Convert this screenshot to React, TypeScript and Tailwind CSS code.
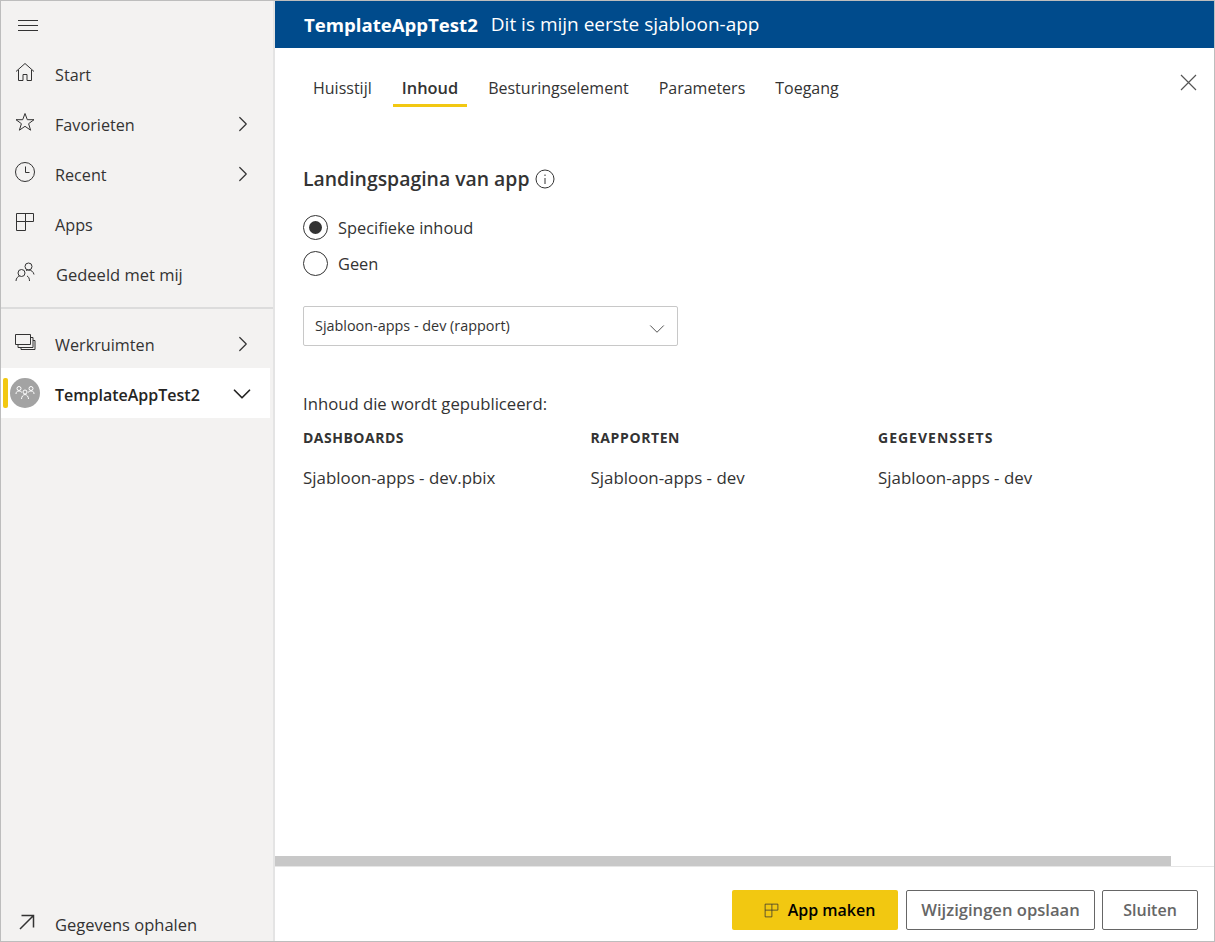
import { ChevronDown, ChevronRight } from 'lucide-react';
import type { ReactNode } from 'react';

const font = { fontFamily: '"Open Sans", "Noto Sans", sans-serif' };

function AppsIcon({ size = 20, color = '#333' }: { size?: number; color?: string }) {
  return (
    <svg width={size} height={size} viewBox="0 0 20 20" fill="none" stroke={color} strokeWidth="1">
      <path d="M1.5 1.5H18.5V9.5H10.5V18.5H1.5Z" />
      <path d="M1.5 9.5H10.5V1.5" />
    </svg>
  );
}

const HomeIcon = (
  <svg width="20" height="20" viewBox="0 0 20 20" fill="none" stroke="#333" strokeWidth="1">
    <path d="M1 9.5 10 1.5l9 8M3.5 8v10.5h4.500v-6h4v6h4.500V8" />
  </svg>
);

const StarIcon = (
  <svg width="20" height="20" viewBox="0 0 20 20" fill="none" stroke="#333" strokeWidth="1">
    <path d="M10 1.500l2.300 6.200h6.700l-5.400 4 2 6.500-5.600-3.900-5.600 3.900 2-6.500-5.400-4h6.700z" />
  </svg>
);

const ClockIcon = (
  <svg width="20" height="20" viewBox="0 0 20 20" fill="none" stroke="#333" strokeWidth="1">
    <circle cx="10" cy="10" r="9.500" />
    <path d="M10.500 4.500v6h4" />
  </svg>
);

const SharedIcon = (
  <svg width="20" height="20" viewBox="0 0 20 20" fill="none" stroke="#333" strokeWidth="1">
    <circle cx="6.500" cy="11" r="3.500" />
    <circle cx="13.500" cy="4.500" r="3.500" />
    <path d="M1 19c0-3 2-4.500 3.500-5M12 14c1.500.5 2.500 2.500 2.500 5M11 8.500c1-.5 1.500-.5 2.500-.5 3 0 5 2 5.500 4.500" />
  </svg>
);

const WorkspacesIcon = (
  <svg width="22" height="20" viewBox="0 0 22 20" fill="none" stroke="#333" strokeWidth="1">
    <path d="M1.500 2.500h15v10h-15z" />
    <path d="M16.500 5.500h2.500v10H4v-3M19 8.500h2v9H7v-2" />
  </svg>
);

const ArrowIcon = (
  <svg width="16" height="16" viewBox="0 0 16 16" fill="none" stroke="#333" strokeWidth="1.500" className="translate-x-[2px]">
    <path d="M1 15 14.500 1.500M2.500 1.500h12v12" />
  </svg>
);

function NavRow({ icon, label, chevron, labelClass = 'ml-[6px] text-[16.200px]' }: { icon: ReactNode; label: string; chevron?: boolean; labelClass?: string }) {
  return (
    <div className="flex h-[50px] items-center text-[#333]">
      <div className="flex w-[48px] -translate-y-[2px] justify-center">{icon}</div>
      <span className={`flex-1 pt-[2px] ${labelClass}`}>{label}</span>
      {chevron && <ChevronRight size={26} strokeWidth={1.1} className="mr-[17px]" />}
    </div>
  );
}

function Radio({ checked, label }: { checked?: boolean; label: string }) {
  return (
    <div className="flex h-[36px] items-center gap-[10px]">
      <div className="flex h-[25px] w-[25px] items-center justify-center rounded-full border border-[#333]">
        {checked && <div className="h-[13px] w-[13px] rounded-full bg-[#333]" />}
      </div>
      <span className="pt-[2px] text-[16.400px] text-[#333]">{label}</span>
    </div>
  );
}

function ContentColumn({ title, item, titleClass }: { title: string; item: string; titleClass: string }) {
  return (
    <div className="w-[287.500px]">
      <div className={`text-[14px] leading-[20px] font-bold text-[#333] ${titleClass}`}>{title}</div>
      <div className="mt-[20px] text-[16.900px] leading-[20px] text-[#333]">{item}</div>
    </div>
  );
}

export default function App() {
  const tabs = ['Huisstijl', 'Inhoud', 'Besturingselement', 'Parameters', 'Toegang'];

  return (
    <div className="flex h-[942px] w-[1215px] overflow-hidden border border-[#bdbdbd] bg-white" style={font}>
      <aside className="flex w-[274px] shrink-0 flex-col border-r-2 border-[#e4e4e4] bg-[#f3f2f1]">
        <div className="flex h-[48px] items-center pl-[17px]">
          <div className="flex w-[20px] flex-col gap-[4px]">
            <div className="h-px bg-[#333]" />
            <div className="h-px bg-[#333]" />
            <div className="h-px bg-[#333]" />
          </div>
        </div>
        <NavRow icon={HomeIcon} label="Start" />
        <NavRow icon={StarIcon} label="Favorieten" chevron />
        <NavRow icon={ClockIcon} label="Recent" chevron />
        <NavRow icon={<AppsIcon />} label="Apps" />
        <NavRow icon={SharedIcon} label="Gedeeld met mij" labelClass="ml-[7px] text-[16.500px]" />
        <div className="mt-[8px] h-[2px] bg-[#dcdcdc]" />
        <div className="mt-[10px] mb-[-1px]">
          <NavRow icon={WorkspacesIcon} label="Werkruimten" chevron />
        </div>
        <div className="mr-[3px] flex h-[50px] items-center bg-white text-[#252423]">
          <div className="ml-[2px] h-[30px] w-[5px] rounded-[2px] bg-[#f2c811]" />
          <div className="ml-[2px] flex h-[30px] w-[30px] items-center justify-center rounded-full bg-[#a3a3a3]">
            <svg width="20" height="16" viewBox="0 0 20 16" fill="none" stroke="#fff" strokeWidth="1">
              <circle cx="4" cy="3.500" r="2" />
              <circle cx="16" cy="3.500" r="2" />
              <circle cx="10" cy="7" r="2" />
              <path d="M1 9c0-2 1-3 3-3 1 0 2 .5 3 1.500M19 9c0-2-1-3-3-3-1 0-2 .5-3 1.500M6.500 14c0-2 1.500-4.500 3.500-4.500s3.500 2.500 3.500 4.500" />
            </svg>
          </div>
          <span className="ml-[15px] flex-1 pt-[3px] text-[16px] font-semibold">TemplateAppTest2</span>
          <ChevronDown size={30} strokeWidth={1.4} className="mr-[13px] translate-y-[1px]" />
        </div>
        <div className="mt-auto mb-[-8px]">
          <NavRow icon={ArrowIcon} label="Gegevens ophalen" labelClass="ml-[6px] text-[16.500px]" />
        </div>
      </aside>

      <main className="flex min-w-0 flex-1 flex-col">
        <header className="flex h-[47px] shrink-0 items-center gap-[13px] bg-[#004b8c] pl-[29px] text-white">
          <span className="text-[18.600px] font-bold">TemplateAppTest2</span>
          <span className="text-[19px]">Dit is mijn eerste sjabloon-app</span>
        </header>

        <div className="flex min-h-0 flex-1 flex-col">
          <div className="flex items-start justify-between">
            <nav className="mt-[21px] ml-[29px] flex gap-[12px]">
              {tabs.map((t) => (
                <div
                  key={t}
                  className={`flex h-[38px] items-center border-b-[3px] px-[9px] pt-[3px] text-[#333] ${
                    t === 'Inhoud' ? 'border-[#f2c811] text-[16.400px] font-semibold' : 'border-transparent text-[16px]'
                  }`}
                >
                  {t}
                </div>
              ))}
            </nav>
            <svg width="18" height="18" viewBox="0 0 18 18" fill="none" stroke="#555" strokeWidth="1.200" className="mt-[25px] mr-[17px]">
              <path d="M2 2 17 17M17 2 2 17" />
            </svg>
          </div>

          <section className="flex-1 pt-[59px] pl-[28px]">
            <div className="flex items-center gap-[5px]">
              <h2 className="pt-[1px] text-[19.400px] leading-[24px] font-semibold text-[#333]">Landingspagina van app</h2>
              <svg width="20" height="20" viewBox="0 0 20 20" fill="none" stroke="#333" strokeWidth="1">
                <circle cx="10" cy="10" r="9" />
                <path d="M10 9v6M10 5.500v1.500" />
              </svg>
            </div>
            <div className="mt-[18px]">
              <Radio checked label="Specifieke inhoud" />
              <Radio label="Geen" />
            </div>
            <div className="mt-[25px] flex h-[40px] w-[375px] items-center justify-between rounded-[2px] border border-[#c8c8c8] pr-[7px] pl-[11px]">
              <span className="text-[14.400px] text-[#333]">Sjabloon-apps - dev (rapport)</span>
              <ChevronDown size={26} strokeWidth={0.85} className="translate-y-[3px] text-[#444]" />
            </div>
            <p className="mt-[47px] text-[16.700px] leading-[22px] text-[#333]">Inhoud die wordt gepubliceerd:</p>
            <div className="mt-[13px] flex">
              <ContentColumn title="DASHBOARDS" item="Sjabloon-apps - dev.pbix" titleClass="tracking-[0.5px]" />
              <ContentColumn title="RAPPORTEN" item="Sjabloon-apps - dev" titleClass="tracking-[0.6px]" />
              <ContentColumn title="GEGEVENSSETS" item="Sjabloon-apps - dev" titleClass="tracking-[1px]" />
            </div>
          </section>

          <div className="h-[10px] w-[896px] shrink-0 bg-[#c8c8c8]" />
        </div>

        <footer className="flex h-[75px] shrink-0 items-start justify-end gap-[8px] border-t border-[#e6e6e6] pt-[23px] pr-[16px]">
          <button className="flex h-[40px] w-[166px] items-center justify-center gap-[9px] rounded-[2px] bg-[#f2c811] pl-[9px] text-[16px] font-semibold text-[#000]">
            <AppsIcon size={15} color="#333" />
            App maken
          </button>
          <button className="h-[40px] w-[189px] rounded-[2px] border border-[#666] text-[16.600px] font-semibold text-[#666]">
            Wijzigingen opslaan
          </button>
          <button className="ml-[-1px] h-[40px] w-[96px] rounded-[2px] border border-[#666] text-[16px] font-semibold text-[#666]">
            Sluiten
          </button>
        </footer>
      </main>
    </div>
  );
}
